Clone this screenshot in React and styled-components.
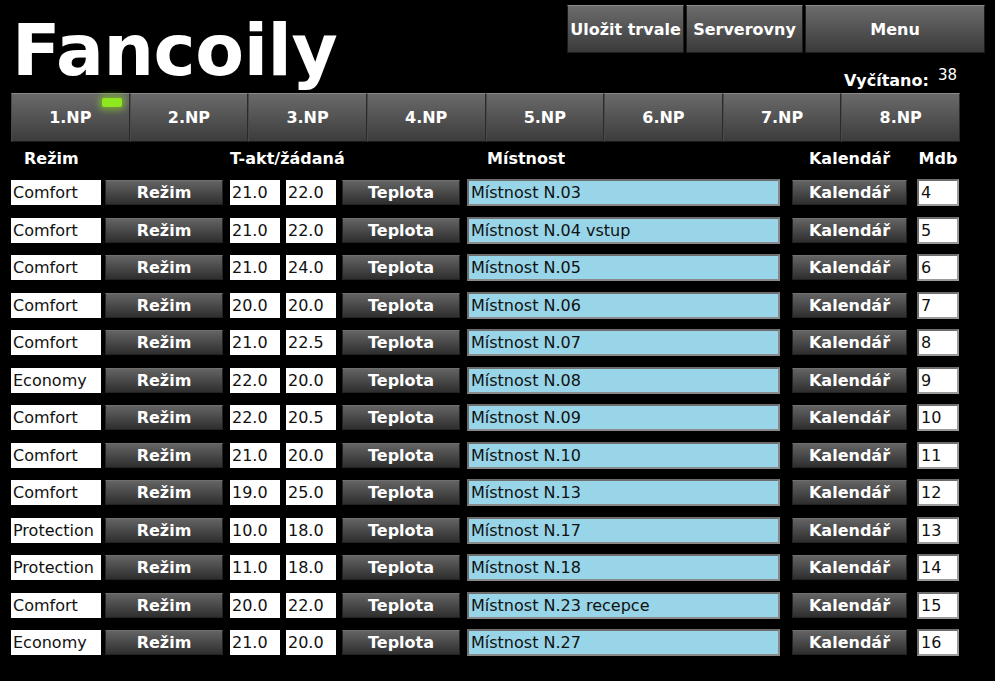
import React from 'react';
import styled, { createGlobalStyle } from 'styled-components';

const GlobalStyle = createGlobalStyle`
  html, body {
    margin: 0;
    padding: 0;
    background: #000;
  }
  body {
    font-family: "DejaVu Sans", Verdana, sans-serif;
    color: #fff;
  }
`;

const Page = styled.div`
  width: 995px;
  height: 681px;
  background: #000;
  overflow: hidden;
`;

const Header = styled.header`
  display: flex;
  justify-content: space-between;
  height: 93px;
`;

const Title = styled.h1`
  margin: 0;
  padding: 15px 0 0 12px;
  font-size: 71px;
  letter-spacing: -0.4px;
  line-height: 1;
  font-weight: bold;
  color: #fff;
`;

const HeaderRight = styled.div`
  display: flex;
  flex-direction: column;
  align-items: flex-end;
  padding: 5px 10px 0 0;
`;

const TopButtons = styled.div`
  display: flex;
  gap: 2px;
`;

const GreyButton = styled.button`
  font-family: inherit;
  font-weight: bold;
  font-size: 16px;
  color: #fff;
  border: 1px solid #1c1c1c;
  border-top-color: #8a8a8a;
  background: linear-gradient(#6c6c6c, #3a3a3a);
  padding: 0;
  cursor: pointer;
`;

const TopButton = styled(GreyButton)`
  width: ${(p) => p.$w}px;
  height: 48px;
`;

const ReadOut = styled.div`
  display: flex;
  align-items: flex-start;
  gap: 9px;
  margin-top: 13px;
  padding-right: 28px;
`;

const ReadLabel = styled.span`
  font-weight: bold;
  font-size: 16px;
  margin-top: 5px;
`;

const ReadValue = styled.span`
  font-size: 15px;
`;

const Tabs = styled.nav`
  display: grid;
  grid-template-columns: repeat(8, 1fr);
  width: 949px;
  height: 49px;
  margin-left: 11px;
`;

const Tab = styled(GreyButton)`
  position: relative;
  height: 49px;
  border-right-color: #2a2a2a;
  border-left-color: #4a4a4a;
  background: linear-gradient(#6a6a6a, #3c3c3c);
`;

const Led = styled.span`
  position: absolute;
  left: 90px;
  top: 4px;
  width: 20px;
  height: 9px;
  border-radius: 2px;
  background: #8fe81e;
  box-shadow: 0 0 6px 3px rgba(140, 220, 30, 0.55);
`;

const Table = styled.section`
  display: flex;
  flex-direction: column;
  gap: 12.5px;
  margin-top: 6px;
`;

const Line = styled.div`
  display: flex;
  align-items: center;
  height: ${(p) => (p.$head ? 20 : 25)}px;
  margin-bottom: ${(p) => (p.$head ? -0.5 : 0)}px;
`;

const HeadCell = styled.div`
  width: ${(p) => p.$w}px;
  margin-left: ${(p) => p.$ml}px;
  padding-left: ${(p) => p.$pl || 0}px;
  box-sizing: border-box;
  text-align: ${(p) => p.$align || 'left'};
  font-weight: bold;
  font-size: 16px;
  white-space: nowrap;
`;

const WhiteBox = styled.div`
  width: ${(p) => p.$w}px;
  margin-left: ${(p) => p.$ml}px;
  height: 25px;
  box-sizing: border-box;
  background: #fff;
  color: #111;
  font-size: 16px;
  line-height: 25px;
  padding-left: 2px;
  white-space: nowrap;
`;

const RowButton = styled(GreyButton)`
  width: ${(p) => p.$w}px;
  margin-left: ${(p) => p.$ml}px;
  height: 25px;
  border-color: #222;
  border-top-color: #707070;
  background: linear-gradient(#646464, #2e2e2e);
`;

const RoomField = styled.div`
  width: 313px;
  margin-left: 7px;
  height: 27px;
  box-sizing: border-box;
  background: #98d5e8;
  border: 2px solid #6e6e6e;
  border-right-color: #8a8a8a;
  border-bottom-color: #8a8a8a;
  color: #111;
  font-size: 16px;
  line-height: 23px;
  padding-left: 2px;
`;

const MdbBox = styled.div`
  width: 42px;
  margin-left: 10px;
  height: 27px;
  box-sizing: border-box;
  background: #fff;
  border: 2px solid #6e6e6e;
  border-right-color: #9a9a9a;
  border-bottom-color: #9a9a9a;
  color: #111;
  font-size: 16px;
  line-height: 23px;
  padding-left: 2px;
`;

const floors = ['1.NP', '2.NP', '3.NP', '4.NP', '5.NP', '6.NP', '7.NP', '8.NP'];

const rows = [
  ['Comfort', '21.0', '22.0', 'Místnost N.03', 4],
  ['Comfort', '21.0', '22.0', 'Místnost N.04 vstup', 5],
  ['Comfort', '21.0', '24.0', 'Místnost N.05', 6],
  ['Comfort', '20.0', '20.0', 'Místnost N.06', 7],
  ['Comfort', '21.0', '22.5', 'Místnost N.07', 8],
  ['Economy', '22.0', '20.0', 'Místnost N.08', 9],
  ['Comfort', '22.0', '20.5', 'Místnost N.09', 10],
  ['Comfort', '21.0', '20.0', 'Místnost N.10', 11],
  ['Comfort', '19.0', '25.0', 'Místnost N.13', 12],
  ['Protection', '10.0', '18.0', 'Místnost N.17', 13],
  ['Protection', '11.0', '18.0', 'Místnost N.18', 14],
  ['Comfort', '20.0', '22.0', 'Místnost N.23 recepce', 15],
  ['Economy', '21.0', '20.0', 'Místnost N.27', 16],
];

export default function App() {
  return (
    <Page>
      <GlobalStyle />
      <Header>
        <Title>Fancoily</Title>
        <HeaderRight>
          <TopButtons>
            <TopButton $w={117}>Uložit trvale</TopButton>
            <TopButton $w={117}>Serverovny</TopButton>
            <TopButton $w={180}>Menu</TopButton>
          </TopButtons>
          <ReadOut>
            <ReadLabel>Vyčítano:</ReadLabel>
            <ReadValue>38</ReadValue>
          </ReadOut>
        </HeaderRight>
      </Header>

      <Tabs>
        {floors.map((f, i) => (
          <Tab key={f}>
            {i === 0 && <Led />}
            {f}
          </Tab>
        ))}
      </Tabs>

      <Table>
        <Line $head>
          <HeadCell $w={90} $ml={11} $pl={13}>Režim</HeadCell>
          <HeadCell $w={230} $ml={129}>T-akt/žádaná</HeadCell>
          <HeadCell $w={313} $ml={7} $pl={20}>Místnost</HeadCell>
          <HeadCell $w={115} $ml={12} $align="center">Kalendář</HeadCell>
          <HeadCell $w={42} $ml={10} $align="center">Mdb</HeadCell>
        </Line>
        {rows.map(([mode, akt, set, room, mdb]) => (
          <Line key={room}>
            <WhiteBox $w={90} $ml={11}>{mode}</WhiteBox>
            <RowButton $w={118} $ml={4}>Režim</RowButton>
            <WhiteBox $w={50} $ml={7}>{akt}</WhiteBox>
            <WhiteBox $w={50} $ml={6}>{set}</WhiteBox>
            <RowButton $w={118} $ml={6}>Teplota</RowButton>
            <RoomField>{room}</RoomField>
            <RowButton $w={115} $ml={12}>Kalendář</RowButton>
            <MdbBox>{mdb}</MdbBox>
          </Line>
        ))}
      </Table>
    </Page>
  );
}
